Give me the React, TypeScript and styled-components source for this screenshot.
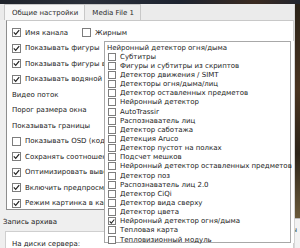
import React from "react";
import styled, { createGlobalStyle } from "styled-components";

const Global = createGlobalStyle`
  html, body { margin: 0; padding: 0; }
  body { font-family: "DejaVu Sans", "Liberation Sans", sans-serif; }
`;

const Screen = styled.div`
  position: relative;
  width: 300px;
  height: 248px;
  overflow: hidden;
  background: #18191e;
  display: flex;
  flex-direction: column;
  font-family: "DejaVu Sans", sans-serif;
  font-size: 7px;
  color: #222222;
`;

const TopStrip = styled.div`
  height: 4px;
  flex: none;
  background: linear-gradient(90deg, #20242c 0%, #2a2f3a 30%, #1d2330 60%, #3a2a20 85%, #22252e 100%);
`;

const Body = styled.div`
  flex: 1;
  display: flex;
  min-height: 0;
`;

const Window = styled.div`
  width: 295px;
  flex: none;
  background: #efefef;
  display: flex;
  flex-direction: column;
  border-right: 1px solid #d8d8d8;
  box-sizing: border-box;
  position: relative;
  z-index: 1;
`;

const TabBar = styled.div`
  height: 16px;
  flex: none;
  display: flex;
  padding-left: 5px;
  background: #ebebeb;
`;

const Tab = styled.div<{ $active?: boolean }>`
  height: 16px;
  box-sizing: border-box;
  padding: 0 6px 0 7px;
  display: flex;
  align-items: center;
  border: 1px solid #c8c8c8;
  border-bottom: none;
  margin-left: -1px;
  background: ${(p) => (p.$active ? "#f7f7f7" : "#ececec")};
  color: #2b2b2b;
`;

const Pane = styled.div`
  height: 190px;
  flex: none;
  margin-left: 6px;
  box-sizing: border-box;
  background: #ffffff;
  border: 1px solid #8e8e8e;
  border-right-color: #d0d0d0;
  border-top-color: #c8c8c8;
  padding: 4px 0 0 5px;
  display: flex;
  flex-direction: column;
`;

const Row = styled.div`
  height: 15.5px;
  flex: none;
  display: flex;
  align-items: center;
  gap: 4px;
  white-space: nowrap;
`;

const Box = styled.span<{ $size: number }>`
  width: ${(p) => p.$size}px;
  height: ${(p) => p.$size}px;
  flex: none;
  box-sizing: border-box;
  border: 1px solid #7d7d7d;
  background: #fff;
  display: inline-flex;
  align-items: center;
  justify-content: center;
  svg { display: block; }
`;

const Spacer = styled.span`
  width: 6px;
`;

const SectionLabel = styled.div`
  height: 14px;
  flex: none;
  display: flex;
  align-items: center;
  justify-content: space-between;
  padding-left: 3px;
  margin-top: 5px;
  white-space: nowrap;
`;

const SideText = styled.span`
  position: relative;
  margin-right: -3px;
  margin-top: 15px;
`;

const ArchiveBox = styled.div`
  flex: 1;
  margin: 2px 0 0 5px;
  background: #fff;
  border: 1px solid #cfcfcf;
  border-bottom: none;
  padding: 8px 0 0 6px;
  display: flex;
  white-space: nowrap;
`;

const Side = styled.div`
  flex: 1;
  display: flex;
  flex-direction: column;
`;

const Video = styled.div`
  height: 214px;
  flex: none;
  background: linear-gradient(180deg, #2a2218 0%, #4a3420 40%, #2c2419 70%, #6a5a3a 100%);
`;

const SideLight = styled.div`
  flex: 1;
  background: #f2f2f2;
  border-top: 1px solid #bdbdbd;
`;

const Popup = styled.div`
  position: absolute;
  z-index: 2;
  left: 104px;
  top: 41px;
  width: 187px;
  height: 202px;
  box-sizing: border-box;
  background: #fff;
  border: 1px solid #a8a8a8;
  padding: 1px 0 0 2px;
  display: flex;
  flex-direction: column;
  box-shadow: 3px 0 0 #ffffff, 4px 0 0 #d4d4d4;
`;

const PopupHeader = styled.div`
  height: 9.2px;
  flex: none;
  display: flex;
  align-items: center;
  white-space: nowrap;
`;

const PopupItem = styled.div`
  height: 9.15px;
  flex: none;
  display: flex;
  align-items: center;
  gap: 4px;
  padding-left: 1px;
  white-space: nowrap;
`;

const Check = () => (
  <svg width="7" height="7" viewBox="0 0 7 7">
    <path d="M0.8 3.4 L2.7 5.4 L6.2 1.2" fill="none" stroke="#222" strokeWidth="1.2" />
  </svg>
);

const CheckBox = ({ checked, size }: { checked?: boolean; size: number }) => (
  <Box $size={size}>{checked ? <Check /> : null}</Box>
);

const items: [string, boolean][] = [
  ["Субтитры", false],
  ["Фигуры и субтитры из скриптов", false],
  ["Детектор движения / SIMT", false],
  ["Детекторы огня/дыма/лиц", false],
  ["Детектор оставленных предметов", false],
  ["Нейронный детектор", false],
  ["AutoTrassir", false],
  ["Распознаватель лиц", false],
  ["Детектор саботажа", false],
  ["Детекция Aruco", false],
  ["Детектор пустот на полках", false],
  ["Подсчет мешков", false],
  ["Нейронный детектор оставленных предметов", false],
  ["Детектор поз", false],
  ["Распознаватель лиц 2.0", false],
  ["Детектор CiQi", false],
  ["Детектор вида сверху", false],
  ["Детектор цвета", false],
  ["Нейронный детектор огня/дыма", true],
  ["Тепловая карта", false],
  ["Тепловизионный модуль", false],
];

export default function App() {
  return (
    <Screen>
      <Global />
      <TopStrip />
      <Body>
        <Window>
          <TabBar>
            <Tab $active>Общие настройки</Tab>
            <Tab>Media File 1</Tab>
          </TabBar>
          <Pane>
            <Row>
              <CheckBox checked size={9} />
              <span>Имя канала</span>
              <Spacer />
              <CheckBox size={9} />
              <span>Жирным</span>
            </Row>
            <Row>
              <CheckBox checked size={9} />
              <span>Показывать фигуры</span>
            </Row>
            <Row>
              <CheckBox checked size={9} />
              <span>Показывать фигуры в</span>
            </Row>
            <Row>
              <CheckBox checked size={9} />
              <span>Показывать водяной знак</span>
            </Row>
            <Row>Видео поток</Row>
            <Row>Порог размера окна</Row>
            <Row>Показывать границы</Row>
            <Row>
              <CheckBox size={9} />
              <span>Показывать OSD (кодек)</span>
            </Row>
            <Row>
              <CheckBox checked size={9} />
              <span>Сохранять соотношение</span>
            </Row>
            <Row>
              <CheckBox checked size={9} />
              <span>Оптимизировать вывод</span>
            </Row>
            <Row>
              <CheckBox checked size={9} />
              <span>Включить предпросмотр</span>
            </Row>
            <Row>
              <CheckBox checked size={9} />
              <span>Режим картинка в картинке</span>
            </Row>
          </Pane>
          <SectionLabel>
            <span>Запись архива</span>
            <SideText>Фильтры</SideText>
          </SectionLabel>
          <ArchiveBox>
            <span>На диски сервера:</span>
          </ArchiveBox>
        </Window>
        <Side>
          <Video />
          <SideLight />
        </Side>
      </Body>
      <Popup>
        <PopupHeader>Нейронный детектор огня/дыма</PopupHeader>
        {items.map(([label, checked]) => (
          <PopupItem key={label}>
            <CheckBox checked={checked} size={8} />
            <span>{label}</span>
          </PopupItem>
        ))}
      </Popup>
    </Screen>
  );
}
